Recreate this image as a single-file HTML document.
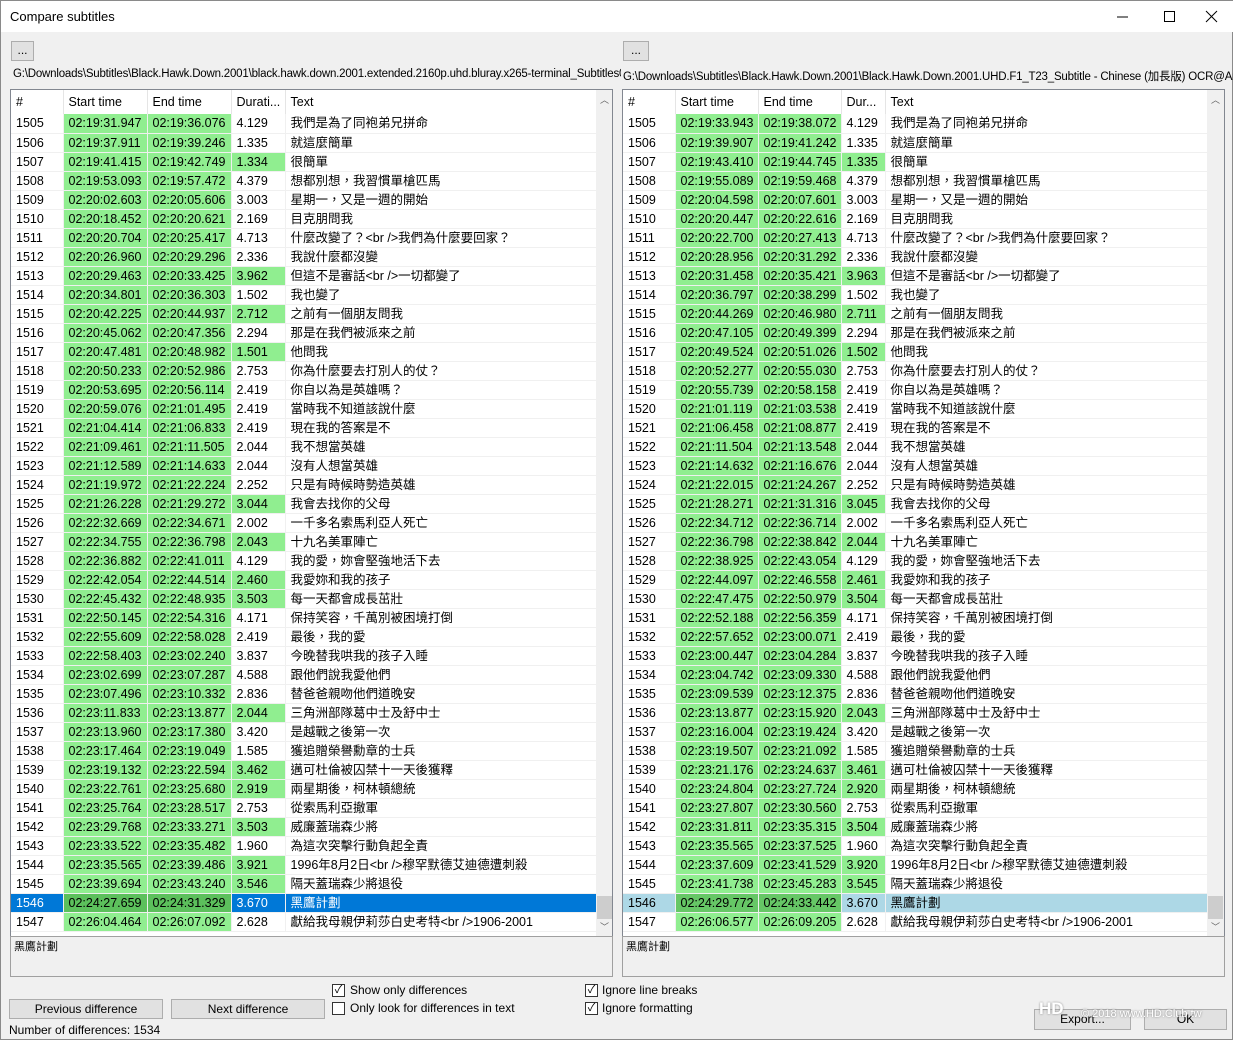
<!DOCTYPE html>
<html><head><meta charset="utf-8"><style>
*{box-sizing:border-box;margin:0;padding:0}
body{width:1233px;height:1040px;overflow:hidden;background:#f0f0f0;font-family:"Liberation Sans","Noto Sans CJK TC",sans-serif;font-size:12px;color:#000;position:relative}
.win{position:absolute;left:0;top:0;width:1233px;height:1040px;border:1px solid #8a8a8a}
.title{position:absolute;left:0;top:0;width:1233px;height:31px;background:#fff}
.title span{position:absolute;left:9px;top:8px;font-size:13px}
.ab{position:absolute}
.btn{position:absolute;background:#e1e1e1;border:1px solid #adadad;text-align:center;font-size:12px}
.path{position:absolute;top:67px;font-size:11.5px;white-space:nowrap;overflow:hidden;letter-spacing:-0.2px}
.list{position:absolute;top:88px;height:848px;background:#fff;border:1px solid #828790;overflow:hidden}
table{border-collapse:collapse;table-layout:fixed;position:absolute;left:0;top:0}
td,th{padding:0 0 0 5px;white-space:nowrap;overflow:hidden;border-right:1px solid #f0f0f0;border-bottom:1px solid #f0f0f0;font-weight:normal;text-align:left;font-size:12.5px}
td{height:19px;line-height:18px}
th{height:24px;line-height:23px;border-bottom:none;border-right:1px solid #e5e5e5}
.g{background:#90ee90}
tr.sl td{background:#0078d7;color:#fff}
tr.sl td.g{background:#5cc05c;color:#000}
tr.sr td{background:#add8e6}
tr.sr td.g{background:#66c766}
.sb{position:absolute;top:0;width:17px;height:846px;background:#f0f0f0}
.sb .th{position:absolute;left:1px;width:15px;top:806px;height:23px;background:#cdcdcd}
.sb .u,.sb .d{position:absolute;left:4px;font-size:9px;color:#606060}
.tb{position:absolute;top:935px;height:41px;background:#f0f0f0;border:1px solid #a0a0a0;font-size:11px;padding:1px 3px}
.cb{position:absolute;width:13px;height:13px;border:1px solid #333;background:#fff;font-size:11px;line-height:11px;text-align:center}
.lab{position:absolute;font-size:12px}
</style></head><body><div class="win">
<div class="title"><span>Compare subtitles</span>
<svg class="ab" style="left:1110px;top:8px" width="120" height="16"><line x1="6" y1="8" x2="17" y2="8" stroke="#000"/><rect x="53.5" y="2.5" width="10" height="10" fill="none" stroke="#000"/><path d="M95 2L106 13M106 2L95 13" stroke="#000"/></svg></div>
<div class="btn" style="left:10px;top:40px;width:23px;height:20px;line-height:17px">...</div>
<div class="btn" style="left:622px;top:40px;width:26px;height:20px;line-height:17px">...</div>
<div class="path" style="left:12px;width:608px">G:\Downloads\Subtitles\Black.Hawk.Down.2001\black.hawk.down.2001.extended.2160p.uhd.bluray.x265-terminal_Subtitles05.Chinese.srt</div>
<div class="path" style="left:622px;width:611px">G:\Downloads\Subtitles\Black.Hawk.Down.2001\Black.Hawk.Down.2001.UHD.F1_T23_Subtitle - Chinese (加長版) OCR@Array</div>

<div class="list" style="left:9px;width:603px">
<table style="width:585px"><colgroup><col style="width:52px"><col style="width:84px"><col style="width:84px"><col style="width:54px"><col style="width:311px"></colgroup>
<tr><th>#</th><th>Start time</th><th>End time</th><th>Durati...</th><th>Text</th></tr>
<tr><td>1505</td><td class="g">02:19:31.947</td><td class="g">02:19:36.076</td><td>4.129</td><td>我們是為了同袍弟兄拼命</td></tr>
<tr><td>1506</td><td class="g">02:19:37.911</td><td class="g">02:19:39.246</td><td>1.335</td><td>就這麼簡單</td></tr>
<tr><td>1507</td><td class="g">02:19:41.415</td><td class="g">02:19:42.749</td><td class="g">1.334</td><td>很簡單</td></tr>
<tr><td>1508</td><td class="g">02:19:53.093</td><td class="g">02:19:57.472</td><td>4.379</td><td>想都別想，我習慣單槍匹馬</td></tr>
<tr><td>1509</td><td class="g">02:20:02.603</td><td class="g">02:20:05.606</td><td>3.003</td><td>星期一，又是一週的開始</td></tr>
<tr><td>1510</td><td class="g">02:20:18.452</td><td class="g">02:20:20.621</td><td>2.169</td><td>目克朋問我</td></tr>
<tr><td>1511</td><td class="g">02:20:20.704</td><td class="g">02:20:25.417</td><td>4.713</td><td>什麼改變了？&lt;br /&gt;我們為什麼要回家？</td></tr>
<tr><td>1512</td><td class="g">02:20:26.960</td><td class="g">02:20:29.296</td><td>2.336</td><td>我說什麼都沒變</td></tr>
<tr><td>1513</td><td class="g">02:20:29.463</td><td class="g">02:20:33.425</td><td class="g">3.962</td><td>但這不是審話&lt;br /&gt;一切都變了</td></tr>
<tr><td>1514</td><td class="g">02:20:34.801</td><td class="g">02:20:36.303</td><td>1.502</td><td>我也變了</td></tr>
<tr><td>1515</td><td class="g">02:20:42.225</td><td class="g">02:20:44.937</td><td class="g">2.712</td><td>之前有一個朋友問我</td></tr>
<tr><td>1516</td><td class="g">02:20:45.062</td><td class="g">02:20:47.356</td><td>2.294</td><td>那是在我們被派來之前</td></tr>
<tr><td>1517</td><td class="g">02:20:47.481</td><td class="g">02:20:48.982</td><td class="g">1.501</td><td>他問我</td></tr>
<tr><td>1518</td><td class="g">02:20:50.233</td><td class="g">02:20:52.986</td><td>2.753</td><td>你為什麼要去打別人的仗？</td></tr>
<tr><td>1519</td><td class="g">02:20:53.695</td><td class="g">02:20:56.114</td><td>2.419</td><td>你自以為是英雄嗎？</td></tr>
<tr><td>1520</td><td class="g">02:20:59.076</td><td class="g">02:21:01.495</td><td>2.419</td><td>當時我不知道該說什麼</td></tr>
<tr><td>1521</td><td class="g">02:21:04.414</td><td class="g">02:21:06.833</td><td>2.419</td><td>現在我的答案是不</td></tr>
<tr><td>1522</td><td class="g">02:21:09.461</td><td class="g">02:21:11.505</td><td>2.044</td><td>我不想當英雄</td></tr>
<tr><td>1523</td><td class="g">02:21:12.589</td><td class="g">02:21:14.633</td><td>2.044</td><td>沒有人想當英雄</td></tr>
<tr><td>1524</td><td class="g">02:21:19.972</td><td class="g">02:21:22.224</td><td>2.252</td><td>只是有時候時勢造英雄</td></tr>
<tr><td>1525</td><td class="g">02:21:26.228</td><td class="g">02:21:29.272</td><td class="g">3.044</td><td>我會去找你的父母</td></tr>
<tr><td>1526</td><td class="g">02:22:32.669</td><td class="g">02:22:34.671</td><td>2.002</td><td>一千多名索馬利亞人死亡</td></tr>
<tr><td>1527</td><td class="g">02:22:34.755</td><td class="g">02:22:36.798</td><td class="g">2.043</td><td>十九名美軍陣亡</td></tr>
<tr><td>1528</td><td class="g">02:22:36.882</td><td class="g">02:22:41.011</td><td>4.129</td><td>我的愛，妳會堅強地活下去</td></tr>
<tr><td>1529</td><td class="g">02:22:42.054</td><td class="g">02:22:44.514</td><td class="g">2.460</td><td>我愛妳和我的孩子</td></tr>
<tr><td>1530</td><td class="g">02:22:45.432</td><td class="g">02:22:48.935</td><td class="g">3.503</td><td>每一天都會成長茁壯</td></tr>
<tr><td>1531</td><td class="g">02:22:50.145</td><td class="g">02:22:54.316</td><td>4.171</td><td>保持笑容，千萬別被困境打倒</td></tr>
<tr><td>1532</td><td class="g">02:22:55.609</td><td class="g">02:22:58.028</td><td>2.419</td><td>最後，我的愛</td></tr>
<tr><td>1533</td><td class="g">02:22:58.403</td><td class="g">02:23:02.240</td><td>3.837</td><td>今晚替我哄我的孩子入睡</td></tr>
<tr><td>1534</td><td class="g">02:23:02.699</td><td class="g">02:23:07.287</td><td>4.588</td><td>跟他們說我愛他們</td></tr>
<tr><td>1535</td><td class="g">02:23:07.496</td><td class="g">02:23:10.332</td><td>2.836</td><td>替爸爸親吻他們道晚安</td></tr>
<tr><td>1536</td><td class="g">02:23:11.833</td><td class="g">02:23:13.877</td><td class="g">2.044</td><td>三角洲部隊葛中士及舒中士</td></tr>
<tr><td>1537</td><td class="g">02:23:13.960</td><td class="g">02:23:17.380</td><td>3.420</td><td>是越戰之後第一次</td></tr>
<tr><td>1538</td><td class="g">02:23:17.464</td><td class="g">02:23:19.049</td><td>1.585</td><td>獲追贈榮譽勳章的士兵</td></tr>
<tr><td>1539</td><td class="g">02:23:19.132</td><td class="g">02:23:22.594</td><td class="g">3.462</td><td>邁可杜倫被囚禁十一天後獲釋</td></tr>
<tr><td>1540</td><td class="g">02:23:22.761</td><td class="g">02:23:25.680</td><td class="g">2.919</td><td>兩星期後，柯林頓總統</td></tr>
<tr><td>1541</td><td class="g">02:23:25.764</td><td class="g">02:23:28.517</td><td>2.753</td><td>從索馬利亞撤軍</td></tr>
<tr><td>1542</td><td class="g">02:23:29.768</td><td class="g">02:23:33.271</td><td class="g">3.503</td><td>威廉蓋瑞森少將</td></tr>
<tr><td>1543</td><td class="g">02:23:33.522</td><td class="g">02:23:35.482</td><td>1.960</td><td>為這次突擊行動負起全責</td></tr>
<tr><td>1544</td><td class="g">02:23:35.565</td><td class="g">02:23:39.486</td><td class="g">3.921</td><td>1996年8月2日&lt;br /&gt;穆罕默德艾迪德遭刺殺</td></tr>
<tr><td>1545</td><td class="g">02:23:39.694</td><td class="g">02:23:43.240</td><td class="g">3.546</td><td>隔天蓋瑞森少將退役</td></tr>
<tr class="sl"><td>1546</td><td class="g">02:24:27.659</td><td class="g">02:24:31.329</td><td>3.670</td><td>黑鷹計劃</td></tr>
<tr><td>1547</td><td class="g">02:26:04.464</td><td class="g">02:26:07.092</td><td>2.628</td><td>獻給我母親伊莉莎白史考特&lt;br /&gt;1906-2001</td></tr>
</table>
<div class="sb" style="left:585px"><span class="u" style="top:3px">︿</span><div class="th"></div><span class="d" style="top:830px">﹀</span></div>
</div>

<div class="list" style="left:621px;width:603px">
<table style="width:584px"><colgroup><col style="width:52px"><col style="width:83px"><col style="width:83px"><col style="width:44px"><col style="width:322px"></colgroup>
<tr><th>#</th><th>Start time</th><th>End time</th><th>Dur...</th><th>Text</th></tr>
<tr><td>1505</td><td class="g">02:19:33.943</td><td class="g">02:19:38.072</td><td>4.129</td><td>我們是為了同袍弟兄拼命</td></tr>
<tr><td>1506</td><td class="g">02:19:39.907</td><td class="g">02:19:41.242</td><td>1.335</td><td>就這麼簡單</td></tr>
<tr><td>1507</td><td class="g">02:19:43.410</td><td class="g">02:19:44.745</td><td class="g">1.335</td><td>很簡單</td></tr>
<tr><td>1508</td><td class="g">02:19:55.089</td><td class="g">02:19:59.468</td><td>4.379</td><td>想都別想，我習慣單槍匹馬</td></tr>
<tr><td>1509</td><td class="g">02:20:04.598</td><td class="g">02:20:07.601</td><td>3.003</td><td>星期一，又是一週的開始</td></tr>
<tr><td>1510</td><td class="g">02:20:20.447</td><td class="g">02:20:22.616</td><td>2.169</td><td>目克朋問我</td></tr>
<tr><td>1511</td><td class="g">02:20:22.700</td><td class="g">02:20:27.413</td><td>4.713</td><td>什麼改變了？&lt;br /&gt;我們為什麼要回家？</td></tr>
<tr><td>1512</td><td class="g">02:20:28.956</td><td class="g">02:20:31.292</td><td>2.336</td><td>我說什麼都沒變</td></tr>
<tr><td>1513</td><td class="g">02:20:31.458</td><td class="g">02:20:35.421</td><td class="g">3.963</td><td>但這不是審話&lt;br /&gt;一切都變了</td></tr>
<tr><td>1514</td><td class="g">02:20:36.797</td><td class="g">02:20:38.299</td><td>1.502</td><td>我也變了</td></tr>
<tr><td>1515</td><td class="g">02:20:44.269</td><td class="g">02:20:46.980</td><td class="g">2.711</td><td>之前有一個朋友問我</td></tr>
<tr><td>1516</td><td class="g">02:20:47.105</td><td class="g">02:20:49.399</td><td>2.294</td><td>那是在我們被派來之前</td></tr>
<tr><td>1517</td><td class="g">02:20:49.524</td><td class="g">02:20:51.026</td><td class="g">1.502</td><td>他問我</td></tr>
<tr><td>1518</td><td class="g">02:20:52.277</td><td class="g">02:20:55.030</td><td>2.753</td><td>你為什麼要去打別人的仗？</td></tr>
<tr><td>1519</td><td class="g">02:20:55.739</td><td class="g">02:20:58.158</td><td>2.419</td><td>你自以為是英雄嗎？</td></tr>
<tr><td>1520</td><td class="g">02:21:01.119</td><td class="g">02:21:03.538</td><td>2.419</td><td>當時我不知道該說什麼</td></tr>
<tr><td>1521</td><td class="g">02:21:06.458</td><td class="g">02:21:08.877</td><td>2.419</td><td>現在我的答案是不</td></tr>
<tr><td>1522</td><td class="g">02:21:11.504</td><td class="g">02:21:13.548</td><td>2.044</td><td>我不想當英雄</td></tr>
<tr><td>1523</td><td class="g">02:21:14.632</td><td class="g">02:21:16.676</td><td>2.044</td><td>沒有人想當英雄</td></tr>
<tr><td>1524</td><td class="g">02:21:22.015</td><td class="g">02:21:24.267</td><td>2.252</td><td>只是有時候時勢造英雄</td></tr>
<tr><td>1525</td><td class="g">02:21:28.271</td><td class="g">02:21:31.316</td><td class="g">3.045</td><td>我會去找你的父母</td></tr>
<tr><td>1526</td><td class="g">02:22:34.712</td><td class="g">02:22:36.714</td><td>2.002</td><td>一千多名索馬利亞人死亡</td></tr>
<tr><td>1527</td><td class="g">02:22:36.798</td><td class="g">02:22:38.842</td><td class="g">2.044</td><td>十九名美軍陣亡</td></tr>
<tr><td>1528</td><td class="g">02:22:38.925</td><td class="g">02:22:43.054</td><td>4.129</td><td>我的愛，妳會堅強地活下去</td></tr>
<tr><td>1529</td><td class="g">02:22:44.097</td><td class="g">02:22:46.558</td><td class="g">2.461</td><td>我愛妳和我的孩子</td></tr>
<tr><td>1530</td><td class="g">02:22:47.475</td><td class="g">02:22:50.979</td><td class="g">3.504</td><td>每一天都會成長茁壯</td></tr>
<tr><td>1531</td><td class="g">02:22:52.188</td><td class="g">02:22:56.359</td><td>4.171</td><td>保持笑容，千萬別被困境打倒</td></tr>
<tr><td>1532</td><td class="g">02:22:57.652</td><td class="g">02:23:00.071</td><td>2.419</td><td>最後，我的愛</td></tr>
<tr><td>1533</td><td class="g">02:23:00.447</td><td class="g">02:23:04.284</td><td>3.837</td><td>今晚替我哄我的孩子入睡</td></tr>
<tr><td>1534</td><td class="g">02:23:04.742</td><td class="g">02:23:09.330</td><td>4.588</td><td>跟他們說我愛他們</td></tr>
<tr><td>1535</td><td class="g">02:23:09.539</td><td class="g">02:23:12.375</td><td>2.836</td><td>替爸爸親吻他們道晚安</td></tr>
<tr><td>1536</td><td class="g">02:23:13.877</td><td class="g">02:23:15.920</td><td class="g">2.043</td><td>三角洲部隊葛中士及舒中士</td></tr>
<tr><td>1537</td><td class="g">02:23:16.004</td><td class="g">02:23:19.424</td><td>3.420</td><td>是越戰之後第一次</td></tr>
<tr><td>1538</td><td class="g">02:23:19.507</td><td class="g">02:23:21.092</td><td>1.585</td><td>獲追贈榮譽勳章的士兵</td></tr>
<tr><td>1539</td><td class="g">02:23:21.176</td><td class="g">02:23:24.637</td><td class="g">3.461</td><td>邁可杜倫被囚禁十一天後獲釋</td></tr>
<tr><td>1540</td><td class="g">02:23:24.804</td><td class="g">02:23:27.724</td><td class="g">2.920</td><td>兩星期後，柯林頓總統</td></tr>
<tr><td>1541</td><td class="g">02:23:27.807</td><td class="g">02:23:30.560</td><td>2.753</td><td>從索馬利亞撤軍</td></tr>
<tr><td>1542</td><td class="g">02:23:31.811</td><td class="g">02:23:35.315</td><td class="g">3.504</td><td>威廉蓋瑞森少將</td></tr>
<tr><td>1543</td><td class="g">02:23:35.565</td><td class="g">02:23:37.525</td><td>1.960</td><td>為這次突擊行動負起全責</td></tr>
<tr><td>1544</td><td class="g">02:23:37.609</td><td class="g">02:23:41.529</td><td class="g">3.920</td><td>1996年8月2日&lt;br /&gt;穆罕默德艾迪德遭刺殺</td></tr>
<tr><td>1545</td><td class="g">02:23:41.738</td><td class="g">02:23:45.283</td><td class="g">3.545</td><td>隔天蓋瑞森少將退役</td></tr>
<tr class="sr"><td>1546</td><td class="g">02:24:29.772</td><td class="g">02:24:33.442</td><td>3.670</td><td>黑鷹計劃</td></tr>
<tr><td>1547</td><td class="g">02:26:06.577</td><td class="g">02:26:09.205</td><td>2.628</td><td>獻給我母親伊莉莎白史考特&lt;br /&gt;1906-2001</td></tr>
</table>
<div class="sb" style="left:584px"><span class="u" style="top:3px">︿</span><div class="th"></div><span class="d" style="top:830px">﹀</span></div>
</div>

<div class="tb" style="left:9px;width:603px">黑鷹計劃</div>
<div class="tb" style="left:621px;width:603px">黑鷹計劃</div>

<div class="cb" style="left:331px;top:983px">✓</div><div class="lab" style="left:349px;top:982px">Show only differences</div>
<div class="cb" style="left:331px;top:1001px"></div><div class="lab" style="left:349px;top:1000px">Only look for differences in text</div>
<div class="cb" style="left:584px;top:983px">✓</div><div class="lab" style="left:601px;top:982px">Ignore line breaks</div>
<div class="cb" style="left:584px;top:1001px">✓</div><div class="lab" style="left:601px;top:1000px">Ignore formatting</div>
<div class="btn" style="left:8px;top:998px;width:154px;height:20px;line-height:18px">Previous difference</div>
<div class="btn" style="left:170px;top:998px;width:154px;height:20px;line-height:18px">Next difference</div>
<div class="lab" style="left:8px;top:1022px">Number of differences: 1534</div>
<div class="btn" style="left:1033px;top:1008px;width:97px;height:21px;line-height:19px">Export...</div>
<div class="btn" style="left:1143px;top:1008px;width:83px;height:21px;line-height:19px">OK</div>
<div class="lab" style="left:1038px;top:998px;font-size:17px;font-weight:bold;color:#fff;text-shadow:0 0 2px #888">HD</div>
<div class="lab" style="left:1080px;top:1007px;font-size:11px;color:#fff;text-shadow:0 0 2px #777">© 2018 www.HD.Club.tw</div>
</div></body></html>
